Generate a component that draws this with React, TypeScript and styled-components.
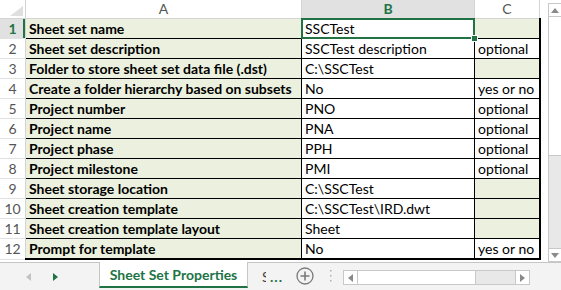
import React from "react";
import styled, { createGlobalStyle } from "styled-components";

const GREEN = "#217346";
const CELL_BG = "#ebf1de";

const Global = createGlobalStyle`
  html, body { margin: 0; padding: 0; background: #fff; }
  body { width: 561px; height: 290px; overflow: hidden; font-family: "Lato", "Liberation Sans", sans-serif; }
`;

const Window = styled.div`
  width: 561px;
  height: 290px;
  display: flex;
  flex-direction: column;
  background: #fff;
`;

const Top = styled.div`
  height: 262px;
  display: flex;
  flex-direction: row;
`;

const Sheet = styled.table`
  border-collapse: collapse;
  table-layout: fixed;
  width: 536px;
  height: max-content;
  align-self: flex-start;
  font-family: "Lato", "Liberation Sans", sans-serif;
  font-size: 14px;
`;

const Corner = styled.th`
  position: relative;
  width: 25px;
  height: 18px;
  padding: 0;
  background: #fff;
  border-right: 1px solid #d4d4d4;
  border-bottom: 1px solid #d4d4d4;
  &::after {
    content: "";
    position: absolute;
    right: 2px;
    bottom: 2px;
    width: 0;
    height: 0;
    border-left: 13px solid transparent;
    border-bottom: 10px solid #dfdfdf;
  }
`;

const ColHead = styled.th<{ $sel?: boolean; $w: number }>`
  width: ${(p) => p.$w}px;
  height: 18px;
  padding: 0;
  font-weight: ${(p) => (p.$sel ? 700 : 400)};
  font-size: 14px;
  color: ${(p) => (p.$sel ? GREEN : "#555")};
  background: ${(p) => (p.$sel ? "#e1e1e1" : "#fff")};
  border-right: 1px solid #d4d4d4;
  border-bottom: 1px solid ${(p) => (p.$sel ? GREEN : "#d4d4d4")};
  text-align: center;
  vertical-align: middle;
  line-height: 18px;
`;

const RowHead = styled.th<{ $sel?: boolean }>`
  height: 19px;
  padding: 0;
  font-weight: ${(p) => (p.$sel ? 700 : 400)};
  font-size: 14px;
  color: ${(p) => (p.$sel ? GREEN : "#555")};
  background: ${(p) => (p.$sel ? "#e1e1e1" : "#fff")};
  border-right: 1px solid #d4d4d4;
  border-bottom: 1px solid #e1e1e1;
  box-shadow: ${(p) => (p.$sel ? `inset -2px 0 0 ${GREEN}` : "none")};
  text-align: center;
  line-height: 19px;
`;

const Cell = styled.td<{ $kind: "label" | "value" | "note"; $filled?: boolean; $last?: boolean; $sel?: boolean }>`
  position: relative;
  height: 19px;
  padding: 0 3px;
  line-height: 19px;
  white-space: nowrap;
  overflow: ${(p) => (p.$sel ? "visible" : "hidden")};
  color: #000;
  font-weight: ${(p) => (p.$kind === "label" ? 700 : 400)};
  background: ${(p) => (p.$kind === "note" && !p.$filled ? CELL_BG : p.$kind === "label" ? CELL_BG : "#fff")};
  border: 1px solid #000;
  border-right-width: ${(p) => (p.$kind === "note" ? 2 : 1)}px;
  border-bottom-width: ${(p) => (p.$last ? 2 : 1)}px;
  ${(p) =>
    p.$sel &&
    `
    &::after {
      content: "";
      position: absolute;
      left: -1px; top: -1px; right: -1px; bottom: -1px;
      border: 2px solid ${GREEN};
      pointer-events: none;
    }
    &::before {
      content: "";
      position: absolute;
      right: -4px; bottom: -4px;
      width: 5px; height: 5px;
      background: ${GREEN};
      border: 1px solid #fff;
      z-index: 2;
    }
  `}
`;

const VScroll = styled.div`
  margin-left: 7px;
  width: 17px;
  height: 262px;
  display: flex;
  flex-direction: column;
  align-items: center;
  padding-top: 3px;
  box-sizing: border-box;
`;

const ScrollBtn = styled.div`
  width: 15px;
  height: 14px;
  border: 1px solid #c8c8c8;
  background: #fff;
  display: flex;
  align-items: center;
  justify-content: center;
  box-sizing: border-box;
`;

const VTrack = styled.div`
  flex: 1;
  width: 15px;
  background: #e8e8e8;
  border-left: 1px solid #c8c8c8;
  border-right: 1px solid #c8c8c8;
  box-sizing: border-box;
  display: flex;
  flex-direction: column;
`;

const VThumb = styled.div`
  height: 138px;
  background: #fff;
  border-bottom: 1px solid #c8c8c8;
`;

const TabBar = styled.div`
  height: 28px;
  border-top: 1px solid #c6c6c6;
  background: #f3f3f3;
  display: flex;
  align-items: flex-start;
  box-sizing: border-box;
  font-family: "Lato", "Liberation Sans", sans-serif;
`;

const NavArea = styled.div`
  width: 99px;
  height: 27px;
  display: flex;
  align-items: center;
  padding-left: 26px;
  gap: 22px;
  box-sizing: border-box;
`;

const Tab = styled.div`
  width: 147px;
  height: 24px;
  background: #fff;
  border-left: 1px solid #c6c6c6;
  border-right: 1px solid #c6c6c6;
  border-bottom: 2px solid ${GREEN};
  margin-top: -1px;
  color: ${GREEN};
  font-weight: 700;
  font-size: 14px;
  display: flex;
  align-items: center;
  justify-content: center;
  box-sizing: content-box;
`;

const MoreTabs = styled.div`
  width: 42px;
  height: 26px;
  display: flex;
  align-items: center;
  padding-left: 14px;
  gap: 4px;
  font-size: 14px;
  box-sizing: border-box;
`;

const CutS = styled.span`
  display: inline-block;
  width: 4px;
  overflow: hidden;
  color: #444;
`;

const Dots = styled.span`
  color: ${GREEN};
  font-weight: 700;
  letter-spacing: 1px;
`;

const AddBtn = styled.div`
  width: 30px;
  height: 26px;
  display: flex;
  align-items: center;
  justify-content: center;
`;

const Splitter = styled.div`
  width: 20px;
  height: 26px;
  display: flex;
  align-items: center;
  justify-content: center;
`;

const HScroll = styled.div`
  margin-left: 3px;
  margin-top: 7px;
  width: 187px;
  height: 15px;
  display: flex;
  flex-direction: row;
`;

const HTrack = styled.div`
  flex: 1;
  background: #e8e8e8;
  border-top: 1px solid #c8c8c8;
  border-bottom: 1px solid #c8c8c8;
  box-sizing: border-box;
  display: flex;
`;

const HThumb = styled.div`
  width: 117px;
  background: #fff;
  border-right: 1px solid #c8c8c8;
`;

const HBtn = styled.div`
  width: 15px;
  height: 15px;
  border: 1px solid #c8c8c8;
  background: #fff;
  display: flex;
  align-items: center;
  justify-content: center;
  box-sizing: border-box;
`;

const Tri = ({ dir, color }: { dir: "up" | "down" | "left" | "right"; color: string }) => {
  const pts = {
    up: "0,5 4,0 8,5",
    down: "0,0 8,0 4,5",
    left: "5,0 5,8 0,4",
    right: "0,0 0,8 5,4",
  }[dir];
  const vert = dir === "up" || dir === "down";
  return (
    <svg width={vert ? 8 : 5} height={vert ? 5 : 8} viewBox={vert ? "0 0 8 5" : "0 0 5 8"}>
      <polygon points={pts} fill={color} />
    </svg>
  );
};

const rows: [string, string, string][] = [
  ["Sheet set name", "SSCTest", ""],
  ["Sheet set description", "SSCTest description", "optional"],
  ["Folder to store sheet set data file (.dst)", "C:\\SSCTest", ""],
  ["Create a folder hierarchy based on subsets", "No", "yes or no"],
  ["Project number", "PNO", "optional"],
  ["Project name", "PNA", "optional"],
  ["Project phase", "PPH", "optional"],
  ["Project milestone", "PMI", "optional"],
  ["Sheet storage location", "C:\\SSCTest", ""],
  ["Sheet creation template", "C:\\SSCTest\\IRD.dwt", ""],
  ["Sheet creation template layout", "Sheet", ""],
  ["Prompt for template", "No", "yes or no"],
];

export default function App() {
  return (
    <Window>
      <Global />
      <Top>
        <Sheet>
          <thead>
            <tr>
              <Corner />
              <ColHead $w={275}>A</ColHead>
              <ColHead $w={172} $sel>
                B
              </ColHead>
              <ColHead $w={64}>C</ColHead>
            </tr>
          </thead>
          <tbody>
            {rows.map(([a, b, c], i) => {
              const last = i === rows.length - 1;
              return (
                <tr key={i}>
                  <RowHead $sel={i === 0}>{i + 1}</RowHead>
                  <Cell $kind="label" $last={last}>
                    {a}
                  </Cell>
                  <Cell $kind="value" $last={last} $sel={i === 0}>
                    {b}
                  </Cell>
                  <Cell $kind="note" $filled={c !== ""} $last={last}>
                    {c}
                  </Cell>
                </tr>
              );
            })}
          </tbody>
        </Sheet>
        <VScroll>
          <ScrollBtn>
            <Tri dir="up" color="#8a8a8a" />
          </ScrollBtn>
          <VTrack>
            <VThumb />
          </VTrack>
          <ScrollBtn>
            <Tri dir="down" color="#8a8a8a" />
          </ScrollBtn>
        </VScroll>
      </Top>
      <TabBar>
        <NavArea>
          <Tri dir="left" color="#c2c2c2" />
          <Tri dir="right" color={GREEN} />
        </NavArea>
        <Tab>Sheet Set Properties</Tab>
        <MoreTabs>
          <CutS>S</CutS>
          <Dots>...</Dots>
        </MoreTabs>
        <AddBtn>
          <svg width="18" height="18" viewBox="0 0 18 18">
            <circle cx="9" cy="9" r="8" fill="none" stroke="#7a7a7a" strokeWidth="1.3" />
            <path d="M9 4.5v9M4.5 9h9" stroke="#7a7a7a" strokeWidth="1.6" />
          </svg>
        </AddBtn>
        <Splitter>
          <svg width="3" height="14" viewBox="0 0 3 14">
            <rect x="1" y="1" width="1.5" height="1.5" fill="#b0b0b0" />
            <rect x="1" y="6" width="1.5" height="1.5" fill="#b0b0b0" />
            <rect x="1" y="11" width="1.5" height="1.5" fill="#b0b0b0" />
          </svg>
        </Splitter>
        <HScroll>
          <HBtn>
            <Tri dir="left" color="#8a8a8a" />
          </HBtn>
          <HTrack>
            <HThumb />
          </HTrack>
          <HBtn>
            <Tri dir="right" color="#8a8a8a" />
          </HBtn>
        </HScroll>
      </TabBar>
    </Window>
  );
}
